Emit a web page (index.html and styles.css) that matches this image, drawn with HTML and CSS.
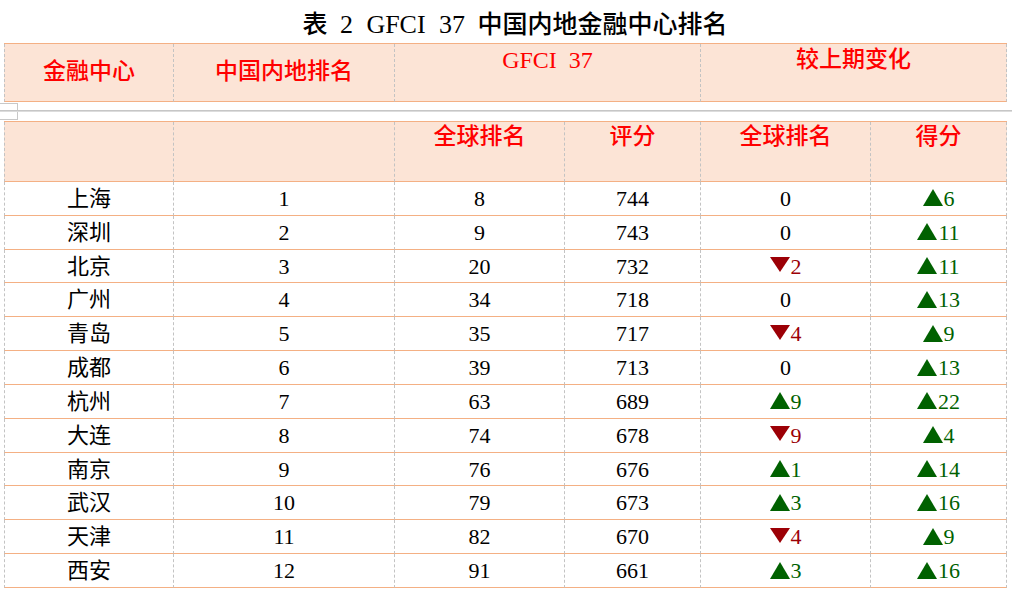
FILE: index.html
```html
<!DOCTYPE html>
<html lang="zh-CN">
<head>
<meta charset="utf-8">
<title>表 2 GFCI 37 中国内地金融中心排名</title>
<link rel="stylesheet" href="styles.css">
</head>
<body>
<div class="page">
  <h1 class="title">表 <span class="tl">2 GFCI 37</span> 中国内地金融中心排名</h1>

  <div class="t1">
    <div class="hc mid">金融中心</div>
    <div class="hc mid">中国内地排名</div>
    <div class="hc top"><span class="lat">GFCI 37</span></div>
    <div class="hc top">较上期变化</div>
  </div>

  <div class="gap">
    <div class="corner"></div>
    <div class="rule"></div>
  </div>

  <div class="t2">
    <div class="hc2"></div>
    <div class="hc2"></div>
    <div class="hc2">全球排名</div>
    <div class="hc2">评分</div>
    <div class="hc2">全球排名</div>
    <div class="hc2">得分</div>

    <div class="c cn">上海</div><div class="c">1</div><div class="c">8</div><div class="c">744</div><div class="c">0</div><div class="c"><span class="up"><svg class="tri-up" viewBox="0 0 20 17" width="20" height="17"><polygon points="10,0 20,17 0,17"/></svg>6</span></div>
    <div class="c cn">深圳</div><div class="c">2</div><div class="c">9</div><div class="c">743</div><div class="c">0</div><div class="c"><span class="up"><svg class="tri-up" viewBox="0 0 20 17" width="20" height="17"><polygon points="10,0 20,17 0,17"/></svg>11</span></div>
    <div class="c cn">北京</div><div class="c">3</div><div class="c">20</div><div class="c">732</div><div class="c"><span class="down"><svg class="tri-down" viewBox="0 0 20 15" width="20" height="15"><polygon points="0,0 20,0 10,15"/></svg>2</span></div><div class="c"><span class="up"><svg class="tri-up" viewBox="0 0 20 17" width="20" height="17"><polygon points="10,0 20,17 0,17"/></svg>11</span></div>
    <div class="c cn">广州</div><div class="c">4</div><div class="c">34</div><div class="c">718</div><div class="c">0</div><div class="c"><span class="up"><svg class="tri-up" viewBox="0 0 20 17" width="20" height="17"><polygon points="10,0 20,17 0,17"/></svg>13</span></div>
    <div class="c cn">青岛</div><div class="c">5</div><div class="c">35</div><div class="c">717</div><div class="c"><span class="down"><svg class="tri-down" viewBox="0 0 20 15" width="20" height="15"><polygon points="0,0 20,0 10,15"/></svg>4</span></div><div class="c"><span class="up"><svg class="tri-up" viewBox="0 0 20 17" width="20" height="17"><polygon points="10,0 20,17 0,17"/></svg>9</span></div>
    <div class="c cn">成都</div><div class="c">6</div><div class="c">39</div><div class="c">713</div><div class="c">0</div><div class="c"><span class="up"><svg class="tri-up" viewBox="0 0 20 17" width="20" height="17"><polygon points="10,0 20,17 0,17"/></svg>13</span></div>
    <div class="c cn">杭州</div><div class="c">7</div><div class="c">63</div><div class="c">689</div><div class="c"><span class="up"><svg class="tri-up" viewBox="0 0 20 17" width="20" height="17"><polygon points="10,0 20,17 0,17"/></svg>9</span></div><div class="c"><span class="up"><svg class="tri-up" viewBox="0 0 20 17" width="20" height="17"><polygon points="10,0 20,17 0,17"/></svg>22</span></div>
    <div class="c cn">大连</div><div class="c">8</div><div class="c">74</div><div class="c">678</div><div class="c"><span class="down"><svg class="tri-down" viewBox="0 0 20 15" width="20" height="15"><polygon points="0,0 20,0 10,15"/></svg>9</span></div><div class="c"><span class="up"><svg class="tri-up" viewBox="0 0 20 17" width="20" height="17"><polygon points="10,0 20,17 0,17"/></svg>4</span></div>
    <div class="c cn">南京</div><div class="c">9</div><div class="c">76</div><div class="c">676</div><div class="c"><span class="up"><svg class="tri-up" viewBox="0 0 20 17" width="20" height="17"><polygon points="10,0 20,17 0,17"/></svg>1</span></div><div class="c"><span class="up"><svg class="tri-up" viewBox="0 0 20 17" width="20" height="17"><polygon points="10,0 20,17 0,17"/></svg>14</span></div>
    <div class="c cn">武汉</div><div class="c">10</div><div class="c">79</div><div class="c">673</div><div class="c"><span class="up"><svg class="tri-up" viewBox="0 0 20 17" width="20" height="17"><polygon points="10,0 20,17 0,17"/></svg>3</span></div><div class="c"><span class="up"><svg class="tri-up" viewBox="0 0 20 17" width="20" height="17"><polygon points="10,0 20,17 0,17"/></svg>16</span></div>
    <div class="c cn">天津</div><div class="c">11</div><div class="c">82</div><div class="c">670</div><div class="c"><span class="down"><svg class="tri-down" viewBox="0 0 20 15" width="20" height="15"><polygon points="0,0 20,0 10,15"/></svg>4</span></div><div class="c"><span class="up"><svg class="tri-up" viewBox="0 0 20 17" width="20" height="17"><polygon points="10,0 20,17 0,17"/></svg>9</span></div>
    <div class="c cn">西安</div><div class="c">12</div><div class="c">91</div><div class="c">661</div><div class="c"><span class="up"><svg class="tri-up" viewBox="0 0 20 17" width="20" height="17"><polygon points="10,0 20,17 0,17"/></svg>3</span></div><div class="c"><span class="up"><svg class="tri-up" viewBox="0 0 20 17" width="20" height="17"><polygon points="10,0 20,17 0,17"/></svg>16</span></div>
  </div>
</div>
</body>
</html>
```

FILE: styles.css
```css
* { box-sizing: border-box; }

html, body {
  margin: 0;
  padding: 0;
  background: #ffffff;
}

body {
  width: 1012px;
  height: 592px;
  overflow: hidden;
  font-family: "Liberation Serif", "Noto Sans CJK SC", serif;
  color: #000;
}

.page {
  display: flex;
  flex-direction: column;
}

.title {
  margin: 0;
  height: 43px;
  padding-top: 7px;
  padding-left: 18px;
  line-height: 36px;
  font-size: 25px;
  font-weight: 500;
  text-align: center;
  word-spacing: 6px;
  color: #000;
}
.tl {
  font-size: 26px;
  font-weight: 400;
  word-spacing: 7px;
}

/* ---------- first header table ---------- */
.t1 {
  margin-left: 4px;
  width: 1003px;
  display: grid;
  grid-template-columns: 169px 221px 306px 307px;
  border-top: 1px solid #f4b084;
}

.hc {
  height: 58px;
  background: #fce4d6;
  border-left: 1px dashed #c3c3c3;
  border-bottom: 1px solid #f4b084;
  color: #ff0000;
  font-size: 23px;
  font-weight: 500;
  text-align: center;
  line-height: 26px;
}
.hc:last-child { border-right: 1px dashed #c3c3c3; }

.hc.mid {
  display: flex;
  align-items: center;
  justify-content: center;
  padding-bottom: 1px;
}
.hc.top { padding-top: 3px; }

.lat {
  font-size: 24px;
  font-weight: 400;
  word-spacing: 6px;
}

/* ---------- split band ---------- */
.gap {
  height: 19px;
  display: grid;
  grid-template-columns: 18px 1fr;
  grid-template-rows: 19px;
}
.corner {
  grid-area: 1 / 1 / 2 / 2;
  margin-top: 1px;
  height: 17px;
  border-top: 1px solid #c8c8c8;
  border-bottom: 1px solid #c8c8c8;
  border-right: 1px solid #c8c8c8;
}
.rule {
  grid-area: 1 / 1 / 2 / 3;
  margin-top: 8px;
  height: 2px;
  border-top: 1px solid #c6c6c6;
  border-bottom: 1px solid #dcdcdc;
}

/* ---------- second table ---------- */
.t2 {
  margin-left: 4px;
  width: 1003px;
  display: grid;
  grid-template-columns: 169px 221px 170px 136px 170px 137px;
  grid-template-rows: 60px;
  grid-auto-rows: 33.84px;
  border-top: 1px solid #f4b084;
}

.hc2 {
  background: #fce4d6;
  border-left: 1px dashed #c3c3c3;
  border-bottom: 1px solid #f4b084;
  color: #ff0000;
  font-size: 23px;
  font-weight: 500;
  text-align: center;
  line-height: 26px;
  padding-top: 2px;
}
.hc2:nth-child(6) { border-right: 1px dashed #c3c3c3; }

.c {
  border-left: 1px dashed #c3c3c3;
  border-bottom: 1px solid #f4b084;
  display: flex;
  align-items: center;
  justify-content: center;
  font-size: 22px;
  line-height: 24px;
  padding-top: 1px;
}
.c:nth-child(6n) { border-right: 1px dashed #c3c3c3; }

.c.cn {
  font-weight: 400;
}

.up {
  color: #006100;
  display: inline-flex;
  align-items: baseline;
}
.down {
  color: #9c0006;
  display: inline-flex;
  align-items: baseline;
}

.tri-up {
  fill: #006100;
  margin-right: 1px;
  align-self: center;
  position: relative;
  top: -1px;
}
.tri-down {
  fill: #9c0006;
  margin-right: 1px;
  align-self: center;
  position: relative;
  top: -2px;
}
```
